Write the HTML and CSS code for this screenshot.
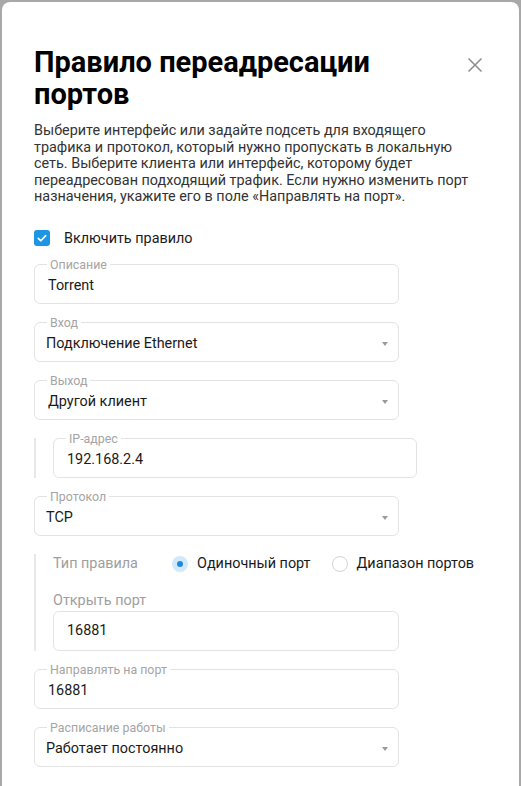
FILE: index.html
```html
<!DOCTYPE html>
<html lang="ru">
<head>
<meta charset="utf-8">
<title>Правило переадресации портов</title>
<link rel="stylesheet" href="styles.css">
</head>
<body>
<div class="modal">
  <div class="header">
    <h1 class="title">Правило переадресации портов</h1>
    <button class="close" aria-label="Закрыть">
      <svg width="24" height="24" viewBox="0 0 24 24"><path d="M5.5 5.5 L18.5 18.5 M18.5 5.5 L5.5 18.5" stroke="#8c8c8c" stroke-width="1.5" fill="none"/></svg>
    </button>
  </div>
  <p class="desc">Выберите интерфейс или задайте подсеть для входящего<br>трафика и протокол, который нужно пропускать в локальную<br>сеть. Выберите клиента или интерфейс, которому будет<br>переадресован подходящий трафик. Если нужно изменить порт<br>назначения, укажите его в поле «Направлять на порт».</p>
  <label class="check-row">
    <span class="checkbox"><svg width="16" height="16" viewBox="0 0 16 16"><path d="M4.3 8.3 L6.9 10.8 L11.7 5.6" stroke="#fff" stroke-width="1.6" fill="none" stroke-linecap="round" stroke-linejoin="round"/></svg></span>
    <span>Включить правило</span>
  </label>
  <div class="form">
    <fieldset class="field"><legend>Описание</legend><div class="value">Torrent</div></fieldset>
    <fieldset class="field"><legend>Вход</legend><div class="value tight"><span>Подключение Ethernet</span><span class="arrow"></span></div></fieldset>
    <fieldset class="field"><legend>Выход</legend><div class="value"><span>Другой клиент</span><span class="arrow"></span></div></fieldset>
    <div class="nested ip">
      <fieldset class="field ipf"><legend>IP-адрес</legend><div class="value">192.168.2.4</div></fieldset>
    </div>
    <fieldset class="field"><legend>Протокол</legend><div class="value tight"><span>TCP</span><span class="arrow"></span></div></fieldset>
    <div class="nested rule">
      <div class="rule-body">
        <div class="rule-row">
          <span class="rule-label">Тип правила</span>
          <span class="radio-opt"><span class="radio on"></span>Одиночный порт</span>
          <span class="radio-opt"><span class="radio"></span>Диапазон портов</span>
        </div>
        <div class="port-label">Открыть порт</div>
        <div class="box">16881</div>
      </div>
    </div>
    <fieldset class="field"><legend>Направлять на порт</legend><div class="value">16881</div></fieldset>
    <fieldset class="field"><legend>Расписание работы</legend><div class="value tight"><span>Работает постоянно</span><span class="arrow"></span></div></fieldset>
  </div>
</div>
</body>
</html>
```
FILE: styles.css
```css
html, body {
  margin: 0;
  height: 786px;
  overflow: hidden;
}
body {
  background: #a8a8a8;
  font-family: Roboto, "Noto Sans", sans-serif;
  color: #1a1a1a;
}
.modal {
  margin: 2px 2px 0;
  background: #fff;
  border-radius: 8px 8px 0 0;
  padding: 44px 32px 80px;
}
.header {
  display: flex;
  align-items: flex-start;
  gap: 16px;
}
.title {
  flex: 1;
  margin: 0;
  font-size: 29px;
  line-height: 32px;
  font-weight: 700;
  color: #000;
}
.close {
  flex: none;
  width: 24px;
  height: 24px;
  margin-top: 7px;
  padding: 0;
  border: 0;
  background: none;
}
.close svg { display: block; }
.desc {
  margin: 13px 0 0;
  font-size: 14.4px;
  line-height: 16.6px;
  color: #333;
}
.check-row {
  display: flex;
  align-items: center;
  gap: 14px;
  margin-top: 24px;
  height: 17px;
  font-size: 14.4px;
  color: #1a1a1a;
}
.checkbox {
  display: flex;
  width: 16px;
  height: 16px;
  border-radius: 3px;
  background: #1e95e3;
}
.form {
  display: flex;
  flex-direction: column;
  align-items: flex-start;
  gap: 11px;
  margin-top: 10px;
}
.field {
  box-sizing: border-box;
  width: 365px;
  min-width: 0;
  margin: 0;
  padding: 0;
  border: 1px solid #e3e3e3;
  border-radius: 6px;
}
.field legend {
  margin-left: 12px;
  padding: 0 3px;
  font-size: 12.4px;
  line-height: 15px;
  color: #a5a5a5;
}
.value {
  display: flex;
  align-items: center;
  justify-content: space-between;
  padding: 4px 10px 7px 13px;
  font-size: 14.4px;
  line-height: 20px;
  color: #1a1a1a;
}
.value.tight { padding-left: 11px; }
.arrow {
  width: 0;
  height: 0;
  border-left: 3px solid transparent;
  border-right: 3px solid transparent;
  border-top: 4px solid #9a9a9a;
}
.nested {
  display: flex;
  gap: 17px;
}
.nested::before {
  content: "";
  flex: none;
  width: 2px;
  background: #e8e8e8;
}
.nested.ip::before { margin-top: 7px; }
.field.ipf { width: 364px; }
.rule { margin-top: 7px; }
.rule-body {
  display: flex;
  flex-direction: column;
}
.rule-row {
  display: flex;
  align-items: center;
  height: 20px;
  font-size: 14.4px;
  white-space: nowrap;
}
.rule-label {
  width: 119px;
  color: #9e9e9e;
}
.radio-opt {
  display: flex;
  align-items: center;
  gap: 9px;
  color: #1a1a1a;
}
.radio-opt + .radio-opt { margin-left: 21px; }
.radio {
  box-sizing: border-box;
  display: flex;
  align-items: center;
  justify-content: center;
  width: 16px;
  height: 16px;
  border-radius: 50%;
  border: 1px solid #d4d4d4;
  background: #fff;
}
.radio.on {
  border: 0;
  background: #d3e9f9;
}
.radio.on::after {
  content: "";
  width: 6px;
  height: 6px;
  border-radius: 50%;
  background: #1a8be0;
}
.port-label {
  margin-top: 17px;
  font-size: 14.4px;
  line-height: 20px;
  color: #9e9e9e;
}
.box {
  box-sizing: border-box;
  display: flex;
  align-items: center;
  width: 346px;
  height: 40px;
  padding-left: 13px;
  border: 1px solid #e3e3e3;
  border-radius: 6px;
  font-size: 14.4px;
  color: #1a1a1a;
}
```
